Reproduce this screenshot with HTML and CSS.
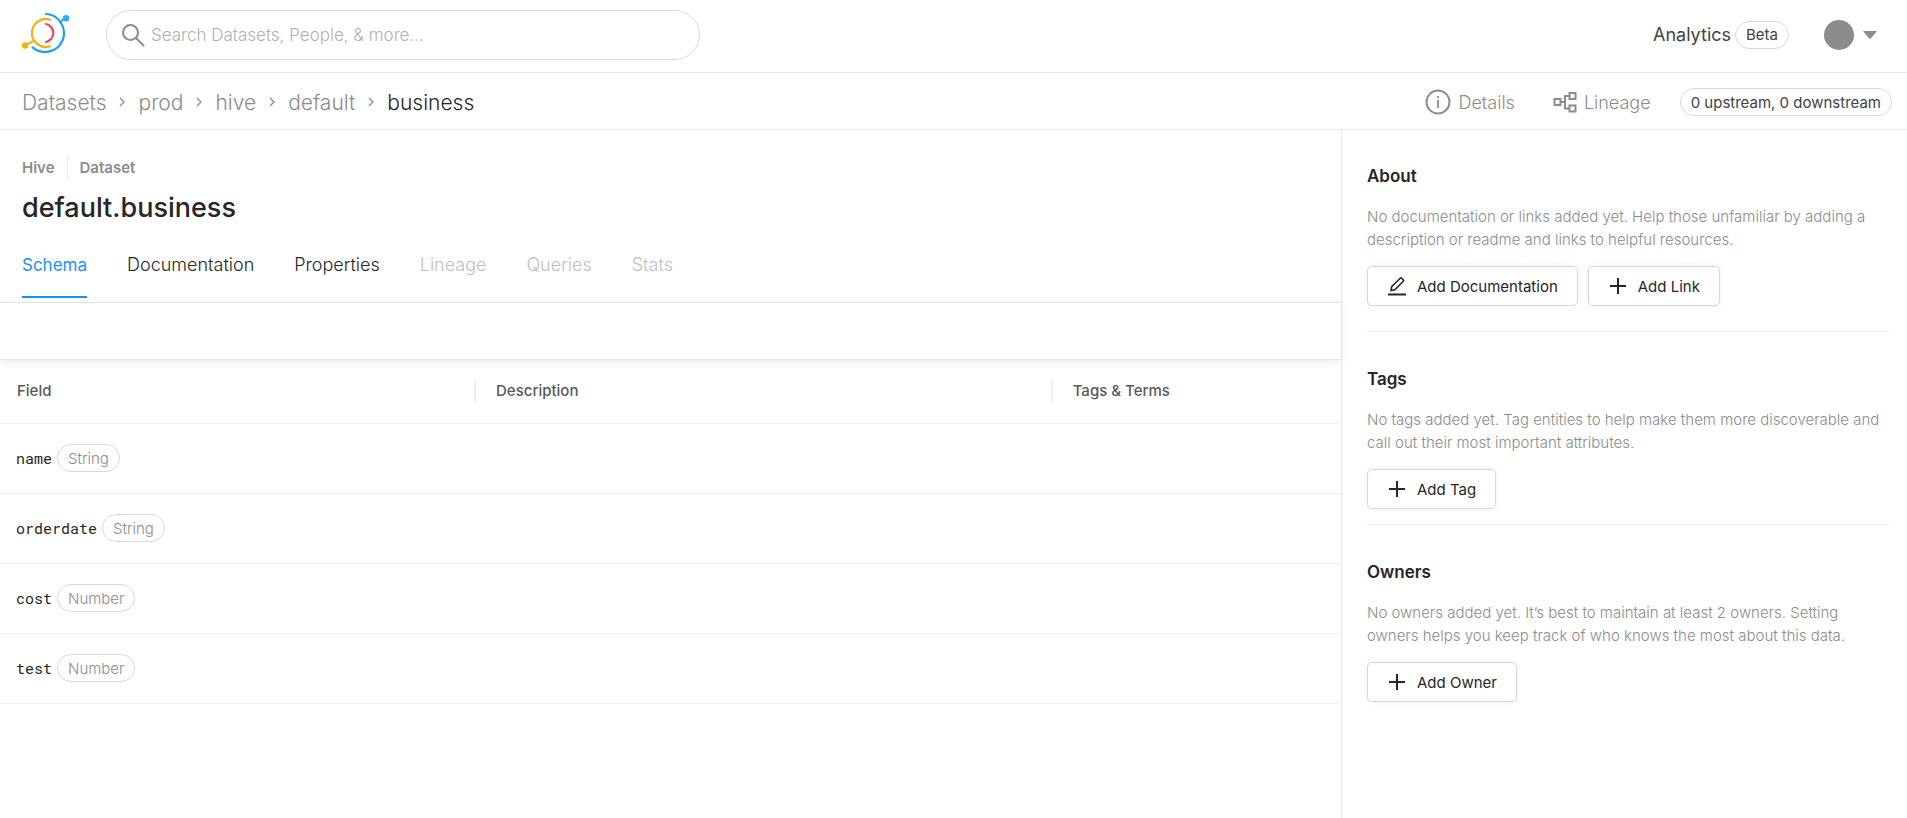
FILE: index.html
```html
<!DOCTYPE html>
<html lang="en">
<head>
<meta charset="utf-8">
<meta name="viewport" content="width=device-width, initial-scale=1">
<title>default.business</title>
<link rel="stylesheet" href="styles.css">
</head>
<body>
<header class="topbar">
  <a class="logo" href="#" aria-label="Home">
    <svg width="50" height="42" viewBox="22 11 50 42" fill="none" stroke-width="2.2" stroke-linecap="round">
      <path d="M46 13a19 19 0 1 1-13.400 33.400" stroke="#1f9dff"/>
      <path d="M60 21l5-4" stroke="#20a9ff"/>
      <circle cx="66" cy="17.300" r="3.200" fill="#20b0ff"/>
      <path d="M50 18.600a14 14 0 1 0 0 26.800" stroke="#efb310"/>
      <path d="M32.500 40.500L25 44.500" stroke="#efb310"/>
      <circle cx="25" cy="44.500" r="3.200" fill="#efb310"/>
      <path d="M46 23a9.200 9.200 0 0 1 0 18" stroke="#e8486d"/>
    </svg>
  </a>
  <form class="search" role="search">
    <svg width="24" height="24" viewBox="0 0 24 24" fill="none" stroke="#8c8c8c" stroke-width="2">
      <circle cx="9.500" cy="9.500" r="7.500"/><path d="M15 15l8 8"/>
    </svg>
    <input class="search-input" type="text" aria-label="Search" placeholder="Search Datasets, People, &amp; more...">
  </form>
  <nav class="account">
    <a class="analytics" href="#">Analytics <span class="pill beta">Beta</span></a>
    <button class="profile" type="button" aria-label="Account menu">
      <span class="avatar"></span>
      <svg width="14" height="8" viewBox="0 0 14 8"><path d="M0 0h14L7.800 7.600q-.8.800-1.600 0z" fill="#8c8c8c"/></svg>
    </button>
  </nav>
</header>

<div class="pathbar">
  <nav class="crumbs" aria-label="Breadcrumb">
    <a href="#">Datasets</a>
    <svg class="chev" viewBox="0 0 6 10"><path d="M1 1l4 4-4 4"/></svg>
    <a href="#">prod</a>
    <svg class="chev" viewBox="0 0 6 10"><path d="M1 1l4 4-4 4"/></svg>
    <a href="#">hive</a>
    <svg class="chev" viewBox="0 0 6 10"><path d="M1 1l4 4-4 4"/></svg>
    <a href="#">default</a>
    <svg class="chev" viewBox="0 0 6 10"><path d="M1 1l4 4-4 4"/></svg>
    <a class="current" href="#">business</a>
  </nav>
  <div class="views">
    <a class="view" href="#">
      <svg width="26" height="26" viewBox="0 0 26 26" fill="none" stroke="#8c8c8c" stroke-width="2"><circle cx="13" cy="13" r="11.500"/><path d="M13 11v8M13 7v2" stroke-width="1.800"/></svg>
      Details
    </a>
    <a class="view" href="#">
      <svg width="24" height="22" viewBox="0 0 24 22" fill="none" stroke="#8c8c8c" stroke-width="2"><path d="M1.500 8h6v6h-6zM16.500 2h6v6h-6zM16.500 14.500h6v6h-6zM7.500 11h4.500M16.500 5H12v12.500h4.500"/></svg>
      Lineage
    </a>
    <span class="pill counts">0 upstream, 0 downstream</span>
  </div>
</div>

<div class="layout">
  <main class="entity">
    <div class="entity-head">
      <div class="kind"><span>Hive</span><span class="kind-type">Dataset</span></div>
      <h1 class="title">default.business</h1>
      <div class="tabs" role="tablist">
        <button class="tab active" type="button" role="tab" aria-selected="true">Schema</button>
        <button class="tab" type="button" role="tab">Documentation</button>
        <button class="tab" type="button" role="tab">Properties</button>
        <button class="tab" type="button" role="tab" disabled>Lineage</button>
        <button class="tab" type="button" role="tab" disabled>Queries</button>
        <button class="tab" type="button" role="tab" disabled>Stats</button>
      </div>
    </div>
    <div class="toolbar"></div>
    <table class="schema">
      <colgroup><col class="col-field"><col class="col-desc"><col></colgroup>
      <thead>
        <tr><th scope="col"><div>Field</div></th><th scope="col"><div>Description</div></th><th scope="col"><div>Tags &amp; Terms</div></th></tr>
      </thead>
      <tbody>
        <tr><td><div class="field"><code>name</code><span class="pill type">String</span></div></td><td></td><td></td></tr>
        <tr><td><div class="field"><code>orderdate</code><span class="pill type">String</span></div></td><td></td><td></td></tr>
        <tr><td><div class="field"><code>cost</code><span class="pill type">Number</span></div></td><td></td><td></td></tr>
        <tr><td><div class="field"><code>test</code><span class="pill type">Number</span></div></td><td></td><td></td></tr>
      </tbody>
    </table>
  </main>

  <aside class="sidebar">
    <section class="panel about">
      <h2>About</h2>
      <p>No documentation or links added yet. Help those unfamiliar by adding a description or readme and links to helpful resources.</p>
      <div class="actions">
        <button class="btn" type="button">
          <svg width="20" height="20" viewBox="0 0 20 20" fill="none" stroke="#262626" stroke-width="1.600"><path d="M1 18.500h18" stroke-width="2"/><path d="M4 14.500l.7-3.800 8.600-8.500q.7-.7 1.400 0l1.600 1.600q.7.700 0 1.400l-8.500 8.500z"/></svg>
          Add Documentation
        </button>
        <button class="btn" type="button">
          <svg width="20" height="20" viewBox="0 0 20 20" stroke="#262626" stroke-width="2"><path d="M10 2v16M2 10h16"/></svg>
          Add Link
        </button>
      </div>
    </section>
    <section class="panel">
      <h2>Tags</h2>
      <p>No tags added yet. Tag entities to help make them more discoverable and call out their most important attributes.</p>
      <div class="actions">
        <button class="btn" type="button">
          <svg width="20" height="20" viewBox="0 0 20 20" stroke="#262626" stroke-width="2"><path d="M10 2v16M2 10h16"/></svg>
          Add Tag
        </button>
      </div>
    </section>
    <section class="panel">
      <h2>Owners</h2>
      <p>No owners added yet. It’s best to maintain at least 2 owners. Setting owners helps you keep track of who knows the most about this data.</p>
      <div class="actions">
        <button class="btn" type="button">
          <svg width="20" height="20" viewBox="0 0 20 20" stroke="#262626" stroke-width="2"><path d="M10 2v16M2 10h16"/></svg>
          Add Owner
        </button>
      </div>
    </section>
  </aside>
</div>
</body>
</html>
```
FILE: styles.css
```css
* { box-sizing: border-box; }
body {
  margin: 0;
  min-height: 100vh;
  display: flex;
  flex-direction: column;
  background: #fff;
  color: #262626;
  font-family: Inter, "Liberation Sans", sans-serif;
  font-size: 15px;
}
a { color: inherit; text-decoration: none; }
button { font: inherit; color: inherit; background: none; border: 0; padding: 0; cursor: pointer; }
svg { display: block; flex: none; }

.pill {
  display: inline-flex;
  align-items: center;
  height: 28px;
  padding: 0 10px;
  border: 1px solid #d9d9d9;
  border-radius: 14px;
  font-size: 15px;
  white-space: nowrap;
}

.topbar {
  display: flex;
  align-items: center;
  height: 73px;
  padding: 0 30px 3px 22px;
  border-bottom: 1px solid #e8e8e8;
}
.logo { margin-right: 34px; padding-bottom: 4px; }
.search {
  display: flex;
  align-items: center;
  gap: 6px;
  flex: 0 1 594px;
  height: 50px;
  padding: 0 14px;
  border: 1px solid #d9d9d9;
  border-radius: 25px;
}
.search-input {
  flex: 1;
  min-width: 0;
  padding: 0;
  border: 0;
  outline: 0;
  background: none;
  font: 300 17px Inter, sans-serif;
}
.search-input::placeholder { color: #b0b0b0; opacity: 1; }
.account { display: flex; align-items: center; gap: 35px; margin-left: auto; }
.analytics { display: flex; align-items: center; gap: 4px; font-size: 18px; color: #434343; }
.profile { display: flex; align-items: center; gap: 9px; }
.avatar { width: 30px; height: 30px; border-radius: 50%; background: #8c8c8c; }

.pathbar {
  display: flex;
  align-items: center;
  justify-content: space-between;
  height: 57px;
  padding: 2px 15px 0 22px;
  border-bottom: 1px solid #e8e8e8;
  color: #8c8c8c;
}
.crumbs { display: flex; align-items: center; gap: 13px; font-size: 21px; font-weight: 300; }
.chev { width: 6px; height: 10px; fill: none; stroke: #8c8c8c; stroke-width: 1.3; }
.current { color: #262626; }
.views { display: flex; align-items: center; }
.view { display: flex; align-items: center; gap: 7px; margin-right: 38px; font-size: 18px; font-weight: 300; }
.view + .pill { margin-left: -9px; }
.counts { color: #434343; }

.layout { display: flex; flex: 1; }
.entity { flex: 1; min-width: 0; }
.entity-head { padding: 26px 22px 0; border-bottom: 1px solid #e8e8e8; }
.kind { display: flex; line-height: 23px; font-weight: 600; color: #8c8c8c; }
.kind-type { margin-left: 12px; padding-left: 12px; border-left: 1px solid #e8e8e8; }
.title { margin: 10px 0 0; font-size: 27px; line-height: 38px; font-weight: 500; }
.tabs { display: flex; gap: 40px; padding-bottom: 4px; margin-top: 16px; }
.tab { height: 55px; padding-bottom: 10px; border-bottom: 2px solid transparent; font-size: 18px; font-weight: 300; }
.tab.active { color: #1890ff; border-color: #1890ff; font-size: 17px; font-weight: 400; }
.tab:disabled { color: #bfbfbf; cursor: default; }
.toolbar {
  height: 57px;
  border-bottom: 1px solid #e8e8e8;
  box-shadow: 0 2px 8px rgba(0, 0, 0, 0.09);
}

.schema { width: 100%; table-layout: fixed; border-collapse: collapse; }
.col-field { width: 35.5%; }
.col-desc { width: 43%; }
.schema th { height: 63px; padding: 0; border-bottom: 1px solid #f0f0f0; text-align: left; font-weight: 500; color: #595959; }
.schema th div { padding-left: 17px; border-right: 2px solid #f0f0f0; line-height: 24px; }
.schema th + th div { padding-left: 20px; }
.schema th:last-child div { border-right: 0; }
.schema td { height: 70px; padding: 0 16px; border-bottom: 1px solid #f0f0f0; }
.field { display: flex; align-items: center; gap: 5px; }
.field code { font: 400 15px/28px "Roboto Mono", "DejaVu Sans Mono", monospace; }
.type { color: #8c8c8c; font-weight: 300; }

.sidebar { flex: 0 0 566px; padding: 0 15px 0 25px; border-left: 1px solid #e8e8e8; }
.panel { padding: 35px 0 15px; border-bottom: 1px solid #f0f0f0; }
.panel.about { padding: 34px 0 25px; }
.panel:last-child { border-bottom: 0; }
.panel h2 { margin: 0; font-size: 17px; line-height: 25px; font-weight: 600; }
.panel p { margin: 16px 0 15px; line-height: 23px; font-weight: 300; color: #8c8c8c; }
.actions { display: flex; gap: 10px; }
.btn {
  display: flex;
  align-items: center;
  gap: 10px;
  height: 40px;
  padding: 0 19px;
  border: 1px solid #d9d9d9;
  border-radius: 5px;
  box-shadow: 0 0 5px rgba(0, 0, 0, 0.08);
  white-space: nowrap;
}
```
